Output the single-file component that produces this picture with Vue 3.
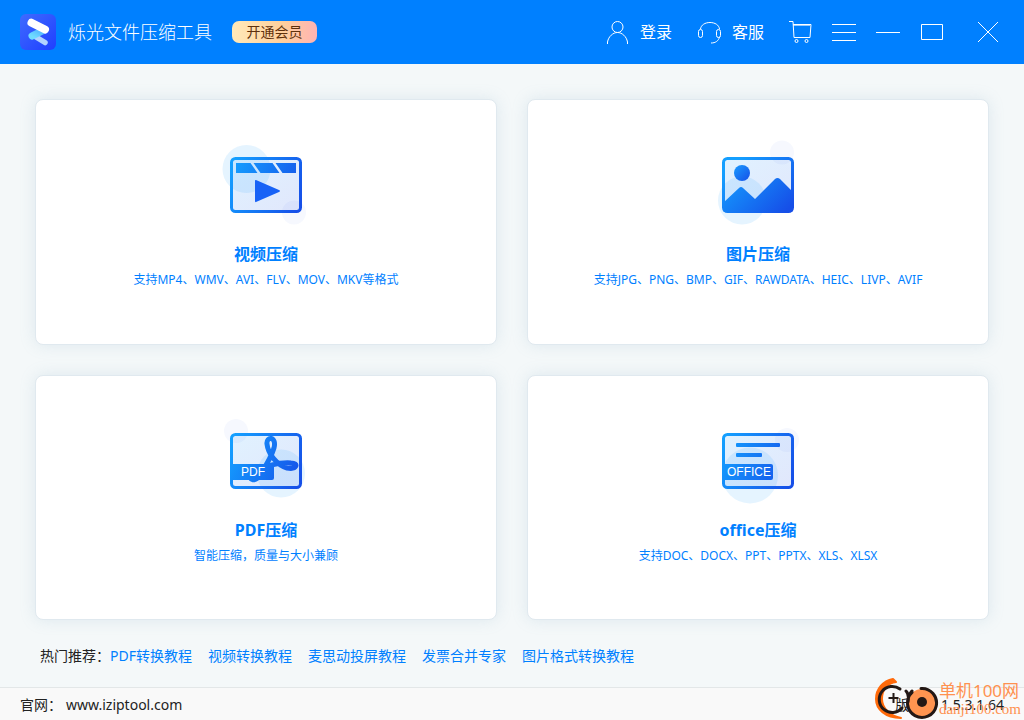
<script setup>
const cards = [
  { id: 'video', title: '视频压缩', text: '支持MP4、WMV、AVI、FLV、MOV、MKV等格式' },
  { id: 'image', title: '图片压缩', text: '支持JPG、PNG、BMP、GIF、RAWDATA、HEIC、LIVP、AVIF' },
  { id: 'pdf', title: 'PDF压缩', text: '智能压缩，质量与大小兼顾' },
  { id: 'office', title: 'office压缩', text: '支持DOC、DOCX、PPT、PPTX、XLS、XLSX' },
]
const links = ['PDF转换教程', '视频转换教程', '麦思动投屏教程', '发票合并专家', '图片格式转换教程']
</script>

<template>
  <div class="app">
    <header class="bar">
      <svg class="logo" viewBox="0 0 36 36" aria-hidden="true">
        <defs>
          <linearGradient id="logoBg" x1="0" y1="0" x2="1" y2="1">
            <stop offset="0" stop-color="#3f6bff" />
            <stop offset="1" stop-color="#1f3fff" />
          </linearGradient>
          <linearGradient id="logoMid" x1="0" y1="1" x2="1" y2="0">
            <stop offset="0" stop-color="#6fdcff" />
            <stop offset="1" stop-color="#4aa8ff" />
          </linearGradient>
        </defs>
        <rect width="36" height="36" rx="6" fill="url(#logoBg)" />
        <path d="M13.500 21.500 25 28.500" stroke="#b3d3ff" stroke-width="5.500" stroke-linecap="round" />
        <path d="M12 22 25 15.500" stroke="url(#logoMid)" stroke-width="7" stroke-linecap="round" />
        <path d="M11.500 8.700 25 15.500" stroke="#fff" stroke-width="8" stroke-linecap="round" />
      </svg>
      <h1>烁光文件压缩工具</h1>
      <button class="vip" type="button">开通会员</button>

      <div class="tools">
        <button class="tool" type="button">
          <svg width="24" height="26" viewBox="0 0 24 26" aria-hidden="true">
            <circle cx="11.500" cy="8" r="5.500" />
            <path d="M1.500 25v-2C2.500 17.500 7 13.500 11.500 13.500S20.500 17.500 21.500 23v2" />
          </svg>
          登录
        </button>
        <button class="tool service" type="button">
          <svg width="24" height="26" viewBox="0 0 24 26" aria-hidden="true">
            <path d="M2.500 10C3 6 7 3.500 12 3.500S21 6 21.500 10" />
            <rect x="0.500" y="10.500" width="4" height="8" rx="2" />
            <rect x="18.500" y="10.500" width="4" height="8" rx="2" />
            <path d="M21.500 18c-1 4-4 6-8.500 6" />
          </svg>
          客服
        </button>
        <button class="tool cart" type="button" aria-label="购物车">
          <svg width="24" height="26" viewBox="0 0 24 26" aria-hidden="true">
            <path d="M1 2.500h4l1 16h16l1-13H5" />
            <path d="M5 6.500h17" opacity=".6" />
            <circle cx="8.500" cy="22" r="1.500" />
            <circle cx="18.500" cy="22" r="1.500" />
          </svg>
        </button>
        <button class="tool menu" type="button" aria-label="菜单">
          <svg width="24" height="24" viewBox="0 0 24 24" aria-hidden="true">
            <path d="M0 4.500h24M0 12.500h24M0 20.500h24" />
          </svg>
        </button>
        <button class="tool min" type="button" aria-label="最小化">
          <svg width="24" height="24" viewBox="0 0 24 24" aria-hidden="true"><path d="M0 12.500h24" /></svg>
        </button>
        <button class="tool max" type="button" aria-label="最大化">
          <svg width="24" height="24" viewBox="0 0 24 24" aria-hidden="true">
            <path d="M1.500 4.500h21v15h-21z" />
          </svg>
        </button>
        <button class="tool close" type="button" aria-label="关闭">
          <svg width="24" height="24" viewBox="0 0 24 24" aria-hidden="true">
            <path d="m2 2 20 20M22 2 2 22" />
          </svg>
        </button>
      </div>
    </header>

    <main>
      <svg class="defs" aria-hidden="true">
        <defs>
          <linearGradient id="blue" gradientUnits="userSpaceOnUse" x1="19" y1="40" x2="91" y2="72">
            <stop offset="0" stop-color="#149fff" />
            <stop offset="1" stop-color="#164fe8" />
          </linearGradient>
          <linearGradient id="pale" x1="0" y1="0" x2="1" y2="1">
            <stop offset="0" stop-color="#e0f2ff" />
            <stop offset="1" stop-color="#e1e7fc" />
          </linearGradient>
          <linearGradient id="sun" x1="0" y1="0" x2="1" y2="1">
            <stop offset="0" stop-color="#1a9cff" />
            <stop offset="1" stop-color="#164fe8" />
          </linearGradient>
          <linearGradient id="hill" gradientUnits="userSpaceOnUse" x1="30" y1="35" x2="80" y2="85">
            <stop offset="0" stop-color="#149fff" />
            <stop offset="1" stop-color="#164fe8" />
          </linearGradient>
        </defs>
      </svg>

      <div class="grid">
        <button v-for="card in cards" :key="card.id" class="card" type="button">
          <svg v-if="card.id === 'video'" class="art" viewBox="0 0 110 100" aria-hidden="true">
            <rect x="20.500" y="29.500" width="69" height="53" rx="4" fill="url(#pale)" />
            <circle cx="35.500" cy="40" r="24" fill="#149fff" opacity=".11" />
            <circle cx="83" cy="83.500" r="12" fill="#164fe8" opacity=".04" />
            <rect x="20.500" y="29.500" width="69" height="53" rx="4" fill="none" stroke="url(#blue)" stroke-width="3" />
            <path d="M25 34h14.500l7 10H25zM42.500 34h19l7 10h-19zM64.500 34H85v10H71.500z" fill="url(#blue)" />
            <path d="M45 51 68 61q2 1 0 2L45 73q-1 .5-1-1v-20q0-1.500 1-1" fill="#1762f6" />
          </svg>
          <svg v-else-if="card.id === 'image'" class="art" viewBox="0 0 110 100" aria-hidden="true">
            <rect x="20.500" y="29.500" width="69" height="53" rx="4" fill="url(#pale)" />
            <circle cx="39" cy="71.500" r="24" fill="#149fff" opacity=".11" />
            <circle cx="79" cy="23.500" r="12" fill="#164fe8" opacity=".04" />
            <circle cx="39" cy="44" r="8" fill="url(#sun)" />
            <path d="M20 74 36 59q2-2 4 0l12 11 20-20q2.500-2 5 0l13 13v18q0 2-2 2H22q-2 0-2-2z" fill="url(#hill)" />
            <rect x="20.500" y="29.500" width="69" height="53" rx="4" fill="none" stroke="url(#hill)" stroke-width="3" />
          </svg>
          <svg v-else-if="card.id === 'pdf'" class="art" viewBox="0 0 110 100" aria-hidden="true">
            <rect x="20.500" y="29.500" width="69" height="53" rx="4" fill="url(#pale)" />
            <circle cx="70" cy="68.500" r="24" fill="#149fff" opacity=".11" />
            <circle cx="25" cy="26" r="12" fill="#164fe8" opacity=".04" />
            <path d="M39 69C38 76 44 77 49 70C54 62 60 53 63 43C66 31 55 31 56 39C57 49 66 60 76 63C86 65 88 58 80 58C71 57 50 61 39 69" fill="none" stroke="url(#blue)" stroke-width="5" stroke-linejoin="round" />
            <rect x="20.500" y="29.500" width="69" height="53" rx="4" fill="none" stroke="url(#blue)" stroke-width="3" />
            <path d="M19 59h44v14q0 2-2 2H19z" fill="url(#blue)" />
            <text x="42" y="71" text-anchor="middle">PDF</text>
          </svg>
          <svg v-else class="art" viewBox="0 0 110 100" aria-hidden="true">
            <rect x="20.500" y="29.500" width="69" height="53" rx="4" fill="url(#pale)" />
            <circle cx="47" cy="70.500" r="28" fill="#149fff" opacity=".11" />
            <circle cx="84" cy="35" r="12" fill="#164fe8" opacity=".04" />
            <rect x="20.500" y="29.500" width="69" height="53" rx="4" fill="none" stroke="url(#blue)" stroke-width="3" />
            <rect x="33" y="38" width="44" height="4" rx="1" fill="url(#blue)" />
            <rect x="33" y="48" width="26" height="4" rx="1" fill="url(#blue)" />
            <path d="M19 59h49q2 0 2 2v12q0 2-2 2H19z" fill="url(#blue)" />
            <text x="46" y="71" text-anchor="middle">OFFICE</text>
          </svg>
          <strong>{{ card.title }}</strong>
          <span>{{ card.text }}</span>
        </button>
      </div>

      <nav class="hot">
        <span>热门推荐：</span>
        <a v-for="link in links" :key="link" href="#">{{ link }}</a>
      </nav>
    </main>

    <footer>
      <span>官网：</span>
      <a href="#">www.iziptool.com</a>
      <span class="version">版本： 1.5.3.1.64</span>
    </footer>

    <div class="mark">
      <svg width="64" height="44" viewBox="0 0 64 44" aria-hidden="true">
        <path d="M18 2C8 4 1 12 1 22s9 19 25 19c-10-2-19-9-19-19S13 6 21 5z" fill="#ff6a0a" stroke="#ff6a0a" stroke-width="2" stroke-linejoin="round" />
        <path d="M25 12A13 13 0 1 0 27 31" fill="none" stroke="#231815" stroke-width="3" stroke-linecap="round" />
        <path d="M18.500 16v10M13.500 21h10" stroke="#231815" stroke-width="2" />
        <circle cx="47" cy="26" r="14" fill="#ff9450" />
        <path d="M46 11.500A14.500 14.500 0 1 1 37 15.500M31 14c3 3 3 6 2 11M37 14l-3 4" fill="none" stroke="#231815" stroke-width="3" stroke-linecap="round" />
        <circle cx="47" cy="25" r="5" fill="#231815" />
      </svg>
      <div class="mark-text">
        <b>单机100网</b>
        <i>danji100.com</i>
      </div>
    </div>
  </div>
</template>

<style>
body {
  margin: 0;
}
</style>

<style scoped>
.app {
  position: relative;
  display: flex;
  flex-direction: column;
  min-height: 100vh;
  background: #f4f8f9;
  color: #222;
  font-family: "Noto Sans", "Noto Sans CJK SC", sans-serif;
  font-size: 14px;
}

button {
  margin: 0;
  padding: 0;
  border: 0;
  background: none;
  color: inherit;
  font: inherit;
  cursor: pointer;
}

a {
  color: inherit;
  text-decoration: none;
}

.bar {
  display: flex;
  align-items: center;
  height: 64px;
  padding: 0 24px 0 20px;
  background: #0080ff;
  color: #fff;
}

.logo {
  width: 36px;
  height: 36px;
  margin-right: 12px;
  fill: none;
}

h1 {
  margin: 0 20px 0 0;
  font-size: 18px;
  font-weight: 300;
  line-height: 24px;
  white-space: nowrap;
}

.vip {
  width: 85px;
  height: 22px;
  border-radius: 7px;
  background: linear-gradient(90deg, #ffe9b9, #ffcf9c 60%, #ffb3b3);
  color: #5e300c;
  line-height: 22px;
}

.tools {
  display: flex;
  align-items: center;
  margin-left: auto;
}

.tool {
  display: flex;
  align-items: center;
  gap: 10px;
  font-size: 16px;
  line-height: 24px;
  white-space: nowrap;
}

.tool svg {
  fill: none;
  stroke: #fff;
  stroke-width: 1;
}

.service {
  margin-left: 26px;
}

.cart {
  margin-left: 24px;
}

.menu,
.min,
.max {
  margin-left: 20px;
}

.close {
  margin-left: 32px;
}

main {
  display: flex;
  flex: 1;
  flex-direction: column;
}

.defs {
  position: absolute;
  width: 0;
  height: 0;
}

.grid {
  display: grid;
  flex: 1;
  grid-template-columns: 1fr 1fr;
  grid-auto-rows: 1fr;
  gap: 30px;
  padding: 35px 35px 0;
}

.card {
  display: flex;
  flex-direction: column;
  align-items: center;
  justify-content: center;
  padding-bottom: 24px;
  border: 1px solid #e0e9ef;
  border-radius: 8px;
  background: #fff;
  box-shadow: 0 0 16px rgba(120, 160, 190, 0.18);
  color: #0080ff;
}

.art {
  width: 110px;
  height: 100px;
}

.art text {
  fill: #fff;
  font-family: "Liberation Sans", sans-serif;
  font-size: 12px;
}

.card strong {
  margin: 13px 0 4px;
  font-size: 16px;
  font-weight: 700;
  line-height: 24px;
}

.card span {
  font-size: 12px;
  line-height: 20px;
}

.hot {
  display: flex;
  align-items: center;
  gap: 16px;
  height: 20px;
  padding: 26px 40px 21px;
  line-height: 20px;
}

.hot span {
  margin-right: -16px;
}

.hot a {
  color: #0080ff;
}

footer {
  display: flex;
  align-items: center;
  height: 32px;
  padding: 0 20px;
  border-top: 1px solid #e3e7e8;
  background: #f9f9f9;
}

footer a {
  margin-left: 4px;
}

.version {
  margin-left: auto;
}

.mark {
  position: absolute;
  right: 3px;
  bottom: 0;
  display: flex;
  align-items: center;
  height: 42px;
  color: #ff9150;
  pointer-events: none;
}

.mark-text {
  display: flex;
  flex-direction: column;
  white-space: nowrap;
}

.mark b {
  font-size: 17px;
  font-weight: 400;
  line-height: 20px;
}

.mark i {
  font-family: "Liberation Serif", serif;
  font-size: 15px;
  font-style: normal;
  line-height: 16px;
}
</style>
